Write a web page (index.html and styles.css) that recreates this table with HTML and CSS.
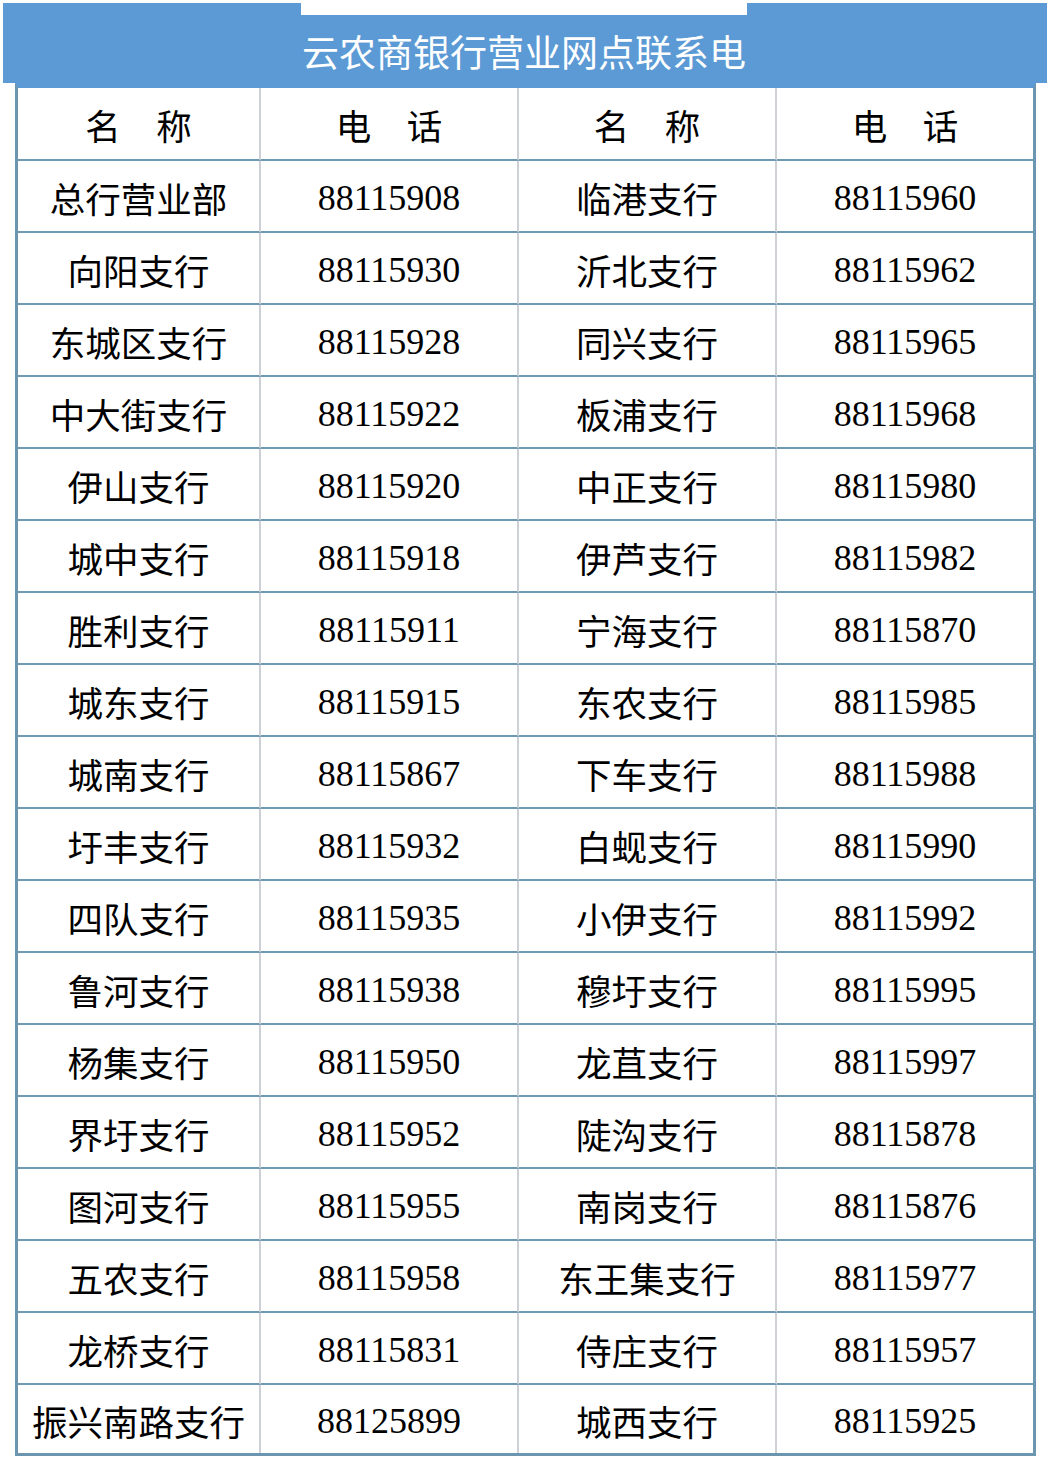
FILE: index.html
```html
<!DOCTYPE html>
<html lang="zh-CN">
<head>
<meta charset="utf-8">
<title>云农商银行营业网点联系电</title>
<link rel="stylesheet" href="styles.css">
</head>
<body>
<div class="page">
  <header class="banner">
    <div class="banner-side"></div>
    <h1 class="banner-title">云农商银行营业网点联系电</h1>
    <div class="banner-side"></div>
  </header>
  <div class="grid">
    <div class="cell head">名　称</div><div class="cell head">电　话</div><div class="cell head">名　称</div><div class="cell head last-col">电　话</div>
    <div class="cell">总行营业部</div><div class="cell num">88115908</div><div class="cell">临港支行</div><div class="cell num last-col">88115960</div>
    <div class="cell">向阳支行</div><div class="cell num">88115930</div><div class="cell">沂北支行</div><div class="cell num last-col">88115962</div>
    <div class="cell">东城区支行</div><div class="cell num">88115928</div><div class="cell">同兴支行</div><div class="cell num last-col">88115965</div>
    <div class="cell">中大街支行</div><div class="cell num">88115922</div><div class="cell">板浦支行</div><div class="cell num last-col">88115968</div>
    <div class="cell">伊山支行</div><div class="cell num">88115920</div><div class="cell">中正支行</div><div class="cell num last-col">88115980</div>
    <div class="cell">城中支行</div><div class="cell num">88115918</div><div class="cell">伊芦支行</div><div class="cell num last-col">88115982</div>
    <div class="cell">胜利支行</div><div class="cell num">88115911</div><div class="cell">宁海支行</div><div class="cell num last-col">88115870</div>
    <div class="cell">城东支行</div><div class="cell num">88115915</div><div class="cell">东农支行</div><div class="cell num last-col">88115985</div>
    <div class="cell">城南支行</div><div class="cell num">88115867</div><div class="cell">下车支行</div><div class="cell num last-col">88115988</div>
    <div class="cell">圩丰支行</div><div class="cell num">88115932</div><div class="cell">白蚬支行</div><div class="cell num last-col">88115990</div>
    <div class="cell">四队支行</div><div class="cell num">88115935</div><div class="cell">小伊支行</div><div class="cell num last-col">88115992</div>
    <div class="cell">鲁河支行</div><div class="cell num">88115938</div><div class="cell">穆圩支行</div><div class="cell num last-col">88115995</div>
    <div class="cell">杨集支行</div><div class="cell num">88115950</div><div class="cell">龙苴支行</div><div class="cell num last-col">88115997</div>
    <div class="cell">界圩支行</div><div class="cell num">88115952</div><div class="cell">陡沟支行</div><div class="cell num last-col">88115878</div>
    <div class="cell">图河支行</div><div class="cell num">88115955</div><div class="cell">南岗支行</div><div class="cell num last-col">88115876</div>
    <div class="cell">五农支行</div><div class="cell num">88115958</div><div class="cell">东王集支行</div><div class="cell num last-col">88115977</div>
    <div class="cell">龙桥支行</div><div class="cell num">88115831</div><div class="cell">侍庄支行</div><div class="cell num last-col">88115957</div>
    <div class="cell last-row">振兴南路支行</div><div class="cell num last-row">88125899</div><div class="cell last-row">城西支行</div><div class="cell num last-row last-col">88115925</div>
  </div>
</div>
</body>
</html>
```
FILE: styles.css
```css
html, body {
  margin: 0;
  padding: 0;
  background: #ffffff;
}
.page {
  width: 1050px;
  padding-top: 3px;
  font-family: "Noto Sans CJK SC", serif;
  color: #000;
}
.banner {
  display: grid;
  grid-template-columns: 298px 446px 1fr;
  margin: 0 3px 0 3px;
  height: 80px;
}
.banner-side {
  background: #5b9ad5;
}
.banner-title {
  margin: 12px 0 0 0;
  background: #5b9ad5;
  color: #ffffff;
  font-weight: 400;
  font-size: 37px;
  line-height: 68px;
  padding-top: 2px;
  height: 66px;
  text-align: center;
  white-space: nowrap;
  letter-spacing: 0;
}
.grid {
  display: grid;
  grid-template-columns: 243px 258px 258px 256px;
  width: 1015px;
  margin-left: 15px;
  border-top: 5px solid #5b9ad5;
  border-left: 3px solid #6c96b0;
  border-right: 3px solid #6c96b0;
  border-bottom: 3px solid #6c96b0;
}
.cell {
  box-sizing: border-box;
  height: 72px;
  display: flex;
  align-items: center;
  justify-content: center;
  font-size: 35.5px;
  white-space: nowrap;
  border-right: 2px solid #cdd0d4;
  border-bottom: 2px solid #6f99b3;
  padding-top: 2px;
}
.num {
  font-family: "Liberation Serif", "Times New Roman", serif;
  font-size: 36px;
  padding-top: 4px;
}
.head {
  height: 73px;
}
.last-col {
  border-right: none;
}
.last-row {
  border-bottom: none;
  height: 68px;
}
```
